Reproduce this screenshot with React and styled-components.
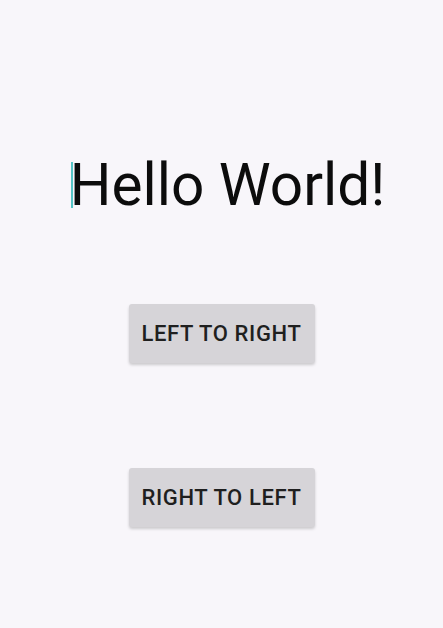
import styled, { createGlobalStyle } from 'styled-components'

const GlobalStyle = createGlobalStyle`
    html, body {
        margin: 0;
        padding: 0;
        background: #f8f6fa;
    }
    body {
        font-family: Roboto, "Noto Sans", sans-serif;
    }
`
const Screen = styled.div`
    width: 443px;
    height: 628px;
    display: flex;
    flex-direction: column;
    align-items: center;
    background: #f8f6fa;
    overflow: hidden;
`
const Field = styled.div`
    margin-top: 149px;
    margin-left: 12px;
    position: relative;
    font-size: 58.5px;
    line-height: 72px;
    color: #0c0c0c;
`
const Cursor = styled.span`
    position: absolute;
    left: 1px;
    top: 13px;
    width: 2px;
    height: 46px;
    background: #54c4c6;
`
const Button = styled.button`
    width: 186px;
    height: 59px;
    margin-top: ${props => props.$gap}px;
    border: none;
    border-radius: 3px;
    background: #d6d4d8;
    color: #1f1f1f;
    font-family: Roboto, sans-serif;
    font-size: 22px;
    font-weight: 500;
    letter-spacing: 0.6px;
    box-shadow: 0 2px 3px rgba(0, 0, 0, 0.18);
    padding: 0;
`

export default function App() {
    return (
        <Screen>
            <GlobalStyle />
            <Field>
                <Cursor />
                Hello World!
            </Field>
            <Button $gap={83}>LEFT TO RIGHT</Button>
            <Button $gap={105}>RIGHT TO LEFT</Button>
        </Screen>
    )
}
